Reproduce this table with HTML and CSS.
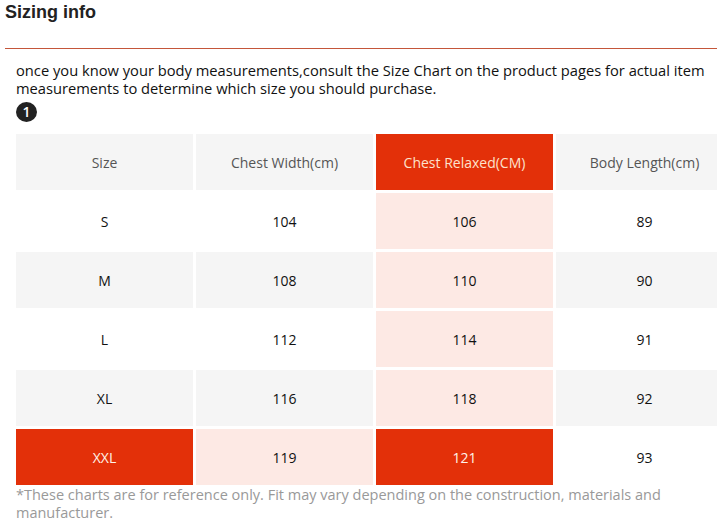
FILE: index.html
```html
<!DOCTYPE html>
<html>
<head>
<meta charset="utf-8">
<link rel="stylesheet" href="styles.css">
</head>
<body>
<div class="head">
  <h2 class="title">Sizing info</h2>
</div>
<div class="content">
  <p class="intro">once you know your body measurements,consult the Size Chart on the product pages for actual item measurements to determine which size you should purchase.</p>
  <div class="badge">1</div>
  <table class="chart">
    <thead>
      <tr>
        <th>Size</th>
        <th>Chest Width(cm)</th>
        <th class="hl">Chest Relaxed(CM)</th>
        <th>Body Length(cm)</th>
      </tr>
    </thead>
    <tbody>
      <tr class="odd"><td>S</td><td>104</td><td class="soft">106</td><td>89</td></tr>
      <tr class="even"><td>M</td><td>108</td><td class="soft">110</td><td>90</td></tr>
      <tr class="odd"><td>L</td><td>112</td><td class="soft">114</td><td>91</td></tr>
      <tr class="even"><td>XL</td><td>116</td><td class="soft">118</td><td>92</td></tr>
      <tr class="odd"><td class="hl">XXL</td><td class="soft">119</td><td class="hl">121</td><td>93</td></tr>
    </tbody>
  </table>
  <p class="note">*These charts are for reference only. Fit may vary depending on the construction, materials and manufacturer.</p>
</div>
</body>
</html>
```

FILE: styles.css
```css
html, body {
  margin: 0;
  padding: 0;
  overflow: hidden;
  background: #fff;
}
body {
  font-family: "Open Sans", "Liberation Sans", sans-serif;
  color: #222;
}
.head {
  height: 48px;
  margin-left: 5px;
  border-bottom: 1px solid #c4563a;
}
.title {
  margin: 0;
  padding-top: 1px;
  font-family: "Liberation Sans", Arial, sans-serif;
  font-weight: bold;
  font-size: 18px;
  line-height: 22px;
  color: #222;
}
.content {
  padding: 12px 0 0 16px;
}
.intro {
  margin: 0;
  font-size: 14.7px;
  line-height: 18px;
  color: #111;
}
.badge {
  margin-top: 5px;
  width: 21px;
  height: 20px;
  border-radius: 50%;
  background: #222;
  color: #fff;
  font-size: 14px;
  font-weight: 600;
  line-height: 20px;
  text-align: center;
}
.chart {
  margin: 9px 0 -3px -3px;
  border-collapse: separate;
  border-spacing: 3px;
  table-layout: fixed;
  width: 723px;
  font-size: 14px;
}
.chart th, .chart td {
  width: 177px;
  height: 56px;
  padding: 0;
  text-align: center;
  vertical-align: middle;
  font-weight: normal;
}
.chart th {
  background: #f5f5f5;
  color: #555;
}
.chart td {
  color: #111;
}
.chart tr.odd td {
  background: #fff;
}
.chart tr.even td {
  background: #f5f5f5;
}
.chart td.soft,
.chart tr.odd td.soft,
.chart tr.even td.soft {
  background: #fde9e4;
}
.chart th.hl {
  background: #e33009;
  color: #fde2cc;
}
.chart td.hl,
.chart tr.odd td.hl {
  background: #e33009;
  color: #fff3ea;
}
.note {
  margin: 1px 0 0;
  font-size: 14.5px;
  line-height: 18px;
  color: #999;
}
```
